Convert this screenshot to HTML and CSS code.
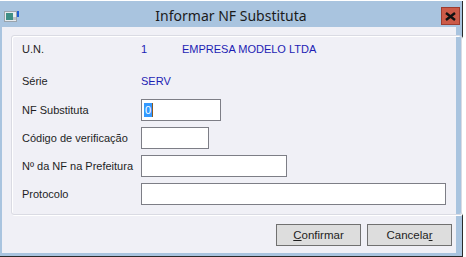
FILE: index.html
```html
<!DOCTYPE html>
<html lang="pt-BR">
<head>
    <meta charset="UTF-8">
    <title>Informar NF Substituta</title>
    <link rel="stylesheet" href="styles.css">
</head>
<body>
    <div class="window">
        <div class="titlebar">
            <svg class="app-icon" width="15" height="11" viewBox="0 0 15 11">
                <rect x="0.5" y="0.5" width="12" height="10" fill="#e8ecef" stroke="#9aa4ad"/>
                <rect x="2" y="2" width="7" height="7" fill="#3f8f86"/>
                <rect x="9" y="6" width="3" height="3" fill="#b9c0c6"/>
                <rect x="13" y="0" width="2" height="6" fill="#1f5fd6"/>
            </svg>
            <div class="title">Informar NF Substituta</div>
            <div class="close-btn">
                <svg width="11" height="9" viewBox="0 0 11 9">
                    <path d="M1 1 L10 8 M10 1 L1 8" stroke="#111" stroke-width="2.4"/>
                </svg>
            </div>
        </div>
        <div class="client">
            <div class="groupbox">
                <div class="row row-un">
                    <span class="label">U.N.</span>
                    <span class="value code">1</span>
                    <span class="value">EMPRESA MODELO LTDA</span>
                </div>
                <div class="row row-serie">
                    <span class="label">Série</span>
                    <span class="value">SERV</span>
                </div>
                <div class="row">
                    <span class="label">NF Substituta</span>
                    <div class="field w-nf"><span class="sel">0</span><span class="caret"></span></div>
                </div>
                <div class="row">
                    <span class="label">Código de verificação</span>
                    <div class="field w-cod"></div>
                </div>
                <div class="row">
                    <span class="label">Nº da NF na Prefeitura</span>
                    <div class="field w-num"></div>
                </div>
                <div class="row">
                    <span class="label">Protocolo</span>
                    <div class="field w-prot"></div>
                </div>
            </div>
            <div class="buttons">
                <button class="btn"><u>C</u>onfirmar</button>
                <button class="btn">Cancela<u>r</u></button>
            </div>
        </div>
    </div>
</body>
</html>
```

FILE: styles.css
```css
body {
    margin: 0;
    padding: 0;
    background-color: #ffffff;
    font-family: "Liberation Sans", Arial, sans-serif;
    font-size: 11px;
    color: #1e1e1e;
}
.window {
    margin-top: 1px;
    width: 462px;
    height: 255px;
    background-color: #a9c4df;
    border-right: 1px solid #2b2b2b;
    border-bottom: 1px solid #2b2b2b;
    display: flex;
    flex-direction: column;
}
.titlebar {
    height: 26px;
    display: grid;
    grid-template-columns: 1fr auto 1fr;
    align-items: center;
}
.app-icon {
    justify-self: start;
    margin-left: 4px;
    margin-top: 4px;
}
.title {
    font-family: "Noto Sans", "Open Sans", sans-serif;
    font-size: 14px;
    color: #1b1b1b;
    padding-top: 3px;
}
.close-btn {
    justify-self: end;
    margin-right: 2px;
    margin-top: 4px;
    width: 17px;
    height: 16px;
    background-color: #cc5a48;
    border: 1px solid #9c3c30;
    display: flex;
    align-items: center;
    justify-content: center;
}
.client {
    flex: 1;
    margin: 0 6px 3px 2px;
    background-color: #f0f0f6;
    padding: 8px 0 0 9px;
}
.groupbox {
    width: 439px;
    height: 176px;
    border: 1px solid #dadbe3;
    box-shadow: inset 1px 1px 0 #ffffff, 1px 1px 0 #ffffff;
    border-radius: 3px;
    padding: 2px 0 0 10px;
    box-sizing: content-box;
    display: flex;
    flex-direction: column;
    gap: 6px;
}
.row {
    height: 22px;
    display: flex;
    align-items: center;
}
.row-un {
    margin-bottom: 4px;
}
.row-serie {
    margin-bottom: 1px;
}
.label {
    width: 119px;
    flex-shrink: 0;
    white-space: nowrap;
}
.value {
    color: #1d1db4;
}
.code {
    width: 41px;
}
.field {
    height: 20px;
    border: 1px solid #7d7e86;
    background-color: #ffffff;
    display: flex;
    align-items: center;
    padding-left: 2px;
}
.w-nf { width: 76px; }
.w-cod { width: 64px; }
.w-num { width: 142px; }
.w-prot { width: 301px; }
.sel {
    background-color: #3399ff;
    color: #ffffff;
    line-height: 14px;
    padding: 0 1px;
}
.caret {
    width: 1px;
    height: 14px;
    background-color: #8a5a20;
}
.buttons {
    margin-top: 9px;
    width: 441px;
    display: flex;
    justify-content: flex-end;
    gap: 6px;
}
.btn {
    width: 85px;
    height: 22px;
    background-color: #dddddd;
    border: 1px solid #707070;
    font-family: "Liberation Sans", Arial, sans-serif;
    font-size: 11.5px;
    color: #1e1e1e;
    padding: 0;
}
```
